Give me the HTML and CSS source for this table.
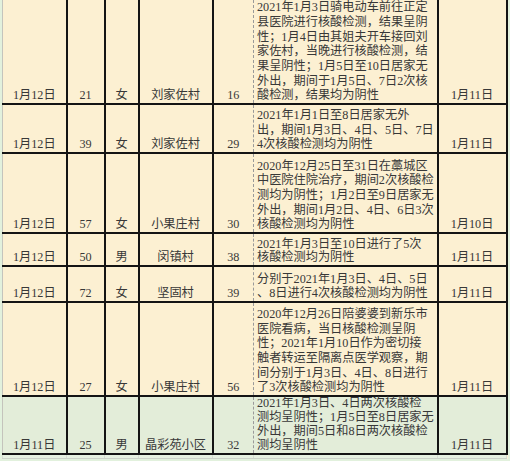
FILE: index.html
```html
<!DOCTYPE html>
<html lang="zh-CN">
<head>
<meta charset="utf-8">
<title>核酸检测记录</title>
<link rel="stylesheet" href="styles.css">
</head>
<body>
<table class="sheet">
  <colgroup>
    <col class="w-date"><col class="w-age"><col class="w-sex"><col class="w-place"><col class="w-no"><col class="w-desc"><col class="w-end">
  </colgroup>
  <tr class="r1">
    <td>1月12日</td><td>21</td><td>女</td><td>刘家佐村</td><td class="c-no">16</td>
    <td class="c-desc"><span class="ln">2021年1月3日骑电动车前往正定</span><span class="ln">县医院进行核酸检测，结果呈阴</span><span class="ln">性；1月4日由其姐夫开车接回刘</span><span class="ln">家佐村，当晚进行核酸检测，结</span><span class="ln">果呈阴性；1月5日至10日居家无</span><span class="ln">外出，期间于1月5日、7日2次核</span><span class="ln">酸检测，结果均为阴性</span></td>
    <td class="c-end">1月11日</td>
  </tr>
  <tr class="r2">
    <td>1月12日</td><td>39</td><td>女</td><td>刘家佐村</td><td class="c-no">29</td>
    <td class="c-desc"><span class="ln">2021年1月1日至8日居家无外</span><span class="ln">出，期间1月3日、4日、5日、7日</span><span class="ln">4次核酸检测均为阴性</span></td>
    <td class="c-end">1月11日</td>
  </tr>
  <tr class="r3">
    <td>1月12日</td><td>57</td><td>女</td><td>小果庄村</td><td class="c-no">30</td>
    <td class="c-desc"><span class="ln">2020年12月25日至31日在藁城区</span><span class="ln">中医院住院治疗，期间2次核酸检</span><span class="ln">测均为阴性；1月2日至9日居家无</span><span class="ln">外出，期间1月2日、4日、6日3次</span><span class="ln">核酸检测均为阴性</span></td>
    <td class="c-end">1月10日</td>
  </tr>
  <tr class="r4">
    <td>1月12日</td><td>50</td><td>男</td><td>闵镇村</td><td class="c-no">38</td>
    <td class="c-desc"><span class="ln">2021年1月3日至10日进行了5次</span><span class="ln">核酸检测均为阴性</span></td>
    <td class="c-end">1月11日</td>
  </tr>
  <tr class="r5">
    <td>1月12日</td><td>72</td><td>女</td><td>坚固村</td><td class="c-no">39</td>
    <td class="c-desc"><span class="ln">分别于2021年1月3日、4日、5日</span><span class="ln">、8日进行4次核酸检测均为阴性</span></td>
    <td class="c-end">1月11日</td>
  </tr>
  <tr class="r6">
    <td>1月12日</td><td>27</td><td>女</td><td>小果庄村</td><td class="c-no">56</td>
    <td class="c-desc"><span class="ln">2020年12月26日陪婆婆到新乐市</span><span class="ln">医院看病，当日核酸检测呈阴</span><span class="ln">性；2021年1月10日作为密切接</span><span class="ln">触者转运至隔离点医学观察，期</span><span class="ln">间分别于1月3日、4日、8日进行</span><span class="ln">了3次核酸检测均为阴性</span></td>
    <td class="c-end">1月11日</td>
  </tr>
  <tr class="r7 green">
    <td>1月11日</td><td>25</td><td>男</td><td>晶彩苑小区</td><td class="c-no">32</td>
    <td class="c-desc"><span class="ln">2021年1月3日、4日两次核酸检</span><span class="ln">测均呈阴性；1月5日至8日居家无</span><span class="ln">外出，期间5日和8日两次核酸检</span><span class="ln">测均呈阴性</span></td>
    <td class="c-end">1月11日</td>
  </tr>
  <tr class="tail">
    <td></td><td></td><td></td><td></td><td class="c-no"></td><td class="c-desc"></td><td class="c-end"></td>
  </tr>
</table>
</body>
</html>
```
FILE: styles.css
```css
html, body {
  margin: 0;
  padding: 0;
  background: #e2f1dd;
}

.sheet {
  border-collapse: collapse;
  table-layout: fixed;
  width: 505px;
  margin-left: 2px;
  background: #fcf0d2;
  font-family: "Liberation Serif", "Noto Sans CJK SC", serif;
  font-size: 12.2px;
  line-height: 14.7px;
  color: #383838;
}

.w-date { width: 64px; }
.w-age { width: 38px; }
.w-sex { width: 34px; }
.w-place { width: 74px; }
.w-no { width: 41px; }
.w-desc { width: 184px; }
.w-end { width: 69px; }

.sheet td {
  padding: 0;
  text-align: center;
  vertical-align: bottom;
  white-space: nowrap;
  border-right: 2px solid #141414;
  border-bottom: 2px solid #141414;
}

.sheet td:first-child {
  border-left: 1px solid #c4c4bc;
}

.sheet td.c-no {
  border-right: 1px dashed #9a9a9a;
}

.sheet td.c-desc {
  text-align: left;
  padding-left: 3px;
}

.ln {
  display: block;
  height: 14.7px;
  line-height: 14.7px;
  overflow: visible;
}

.r1 { height: 104px; }
.r2 { height: 49px; }
.r3 { height: 80px; }
.r4 { height: 33px; }
.r5 { height: 36px; }
.r6 { height: 94px; }
.r7 { height: 58px; }

.r4 .ln { height: 13.6px; line-height: 13.6px; }
.r7 .ln { height: 13.9px; line-height: 13.9px; }

.green td {
  background: #e3edd9;
}

.tail { height: 4px; }
.tail td {
  background: #e6f1e1;
  border-right: 1px solid #d6ddd2;
  border-bottom: 1px solid #cdd3ca;
}
.sheet .tail td:first-child { border-left: 1px solid #d6ddd2; }
.sheet .tail td.c-no { border-right: 1px solid #d6ddd2; }
```
